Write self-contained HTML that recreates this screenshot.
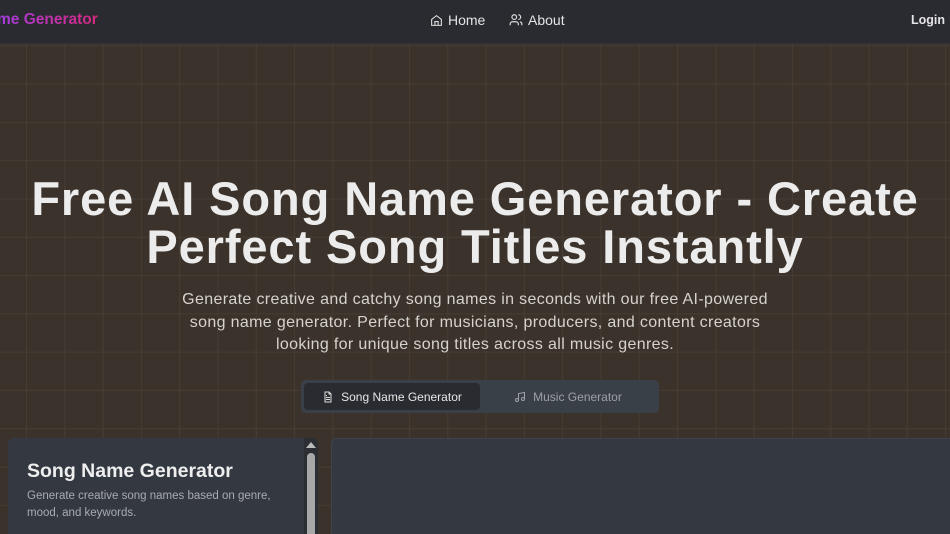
<!DOCTYPE html>
<html><head><meta charset="utf-8"><style>
*{margin:0;padding:0;box-sizing:border-box}
html,body{width:950px;height:534px;overflow:hidden}
body{font-family:"Liberation Sans",sans-serif;background-color:#3b332b;
background-image:linear-gradient(to right,#463d34 1px,transparent 1px),linear-gradient(to bottom,#463d34 1px,transparent 1px);
background-size:38.3px 38.3px;background-position:26px 7px;position:relative}
.nav{position:absolute;top:0;left:0;width:950px;height:44px;background:#2a2b30;border-bottom:1px solid #33343a}
.logo{position:absolute;left:-3px;top:11px;font-size:15.5px;font-weight:bold;background:linear-gradient(90deg,#a33ee0,#d6287f);-webkit-background-clip:text;color:transparent}
.nl{position:absolute;top:12px;font-size:14px;color:#e4e4e8;display:flex;align-items:center;gap:5px}
h1{position:absolute;top:175px;left:0;width:950px;text-align:center;font-size:47px;letter-spacing:0.9px;line-height:48px;font-weight:bold;color:#ececec}
p.sub{position:absolute;top:289px;left:170px;width:610px;text-align:center;font-size:16px;letter-spacing:0.35px;line-height:22.5px;color:#d6d2cd}
.tabs{position:absolute;left:301px;top:380px;width:358px;height:33px;background:#3a4048;border-radius:5px}
.t1{position:absolute;left:3px;top:3px;width:176px;height:27px;background:#2a2b30;border-radius:4px;color:#e6e6e6;font-size:12px;display:flex;align-items:center;justify-content:center;gap:7px}
.t2{position:absolute;left:179px;top:3px;width:176px;height:27px;color:#9ca0a8;font-size:12px;display:flex;align-items:center;justify-content:center;gap:7px}
.card{position:absolute;left:8px;top:438px;width:310px;height:100px;background:#343941;border-radius:6px}
.card h2{position:absolute;left:19px;top:22px;font-size:19.5px;color:#eee;font-weight:bold}
.card p{position:absolute;left:19px;top:50px;width:265px;font-size:11.5px;line-height:16.5px;color:#a8abb0}
.sb{position:absolute;left:304px;top:438px;width:14px;height:100px;background:#2b2e33;border-radius:0 6px 0 0}
.thumb{position:absolute;left:307px;top:453px;width:8px;height:90px;background:#a8a8a8;border-radius:4px}
.arr{position:absolute;left:306px;top:442px;width:0;height:0;border-left:5px solid transparent;border-right:5px solid transparent;border-bottom:6px solid #bbb}
.panel{position:absolute;left:331px;top:438px;width:630px;height:100px;background:#343941;border-radius:6px;border:1px solid #3e434b}
</style></head><body>
<div class="nav">
<div class="logo">me Generator</div>
<div class="nl" style="left:430px"><svg width="13" height="13" viewBox="0 0 24 24" fill="none" stroke="#ddd" stroke-width="2"><path d="M3 10l9-7 9 7v11H3z"/><path d="M9 21v-7h6v7"/></svg>Home</div>
<div class="nl" style="left:509px"><svg width="14" height="14" viewBox="0 0 24 24" fill="none" stroke="#ddd" stroke-width="2"><circle cx="9" cy="7" r="4"/><path d="M2 21v-2a4 4 0 0 1 4-4h6a4 4 0 0 1 4 4v2M16 3a4 4 0 0 1 0 8M22 21v-2a4 4 0 0 0-3-3.9"/></svg>About</div>
<div class="nl" style="left:911px;font-size:12.5px;font-weight:bold;top:13px">Login</div>
</div>
<h1>Free AI Song Name Generator - Create<br>Perfect Song Titles Instantly</h1>
<p class="sub">Generate creative and catchy song names in seconds with our free AI-powered<br>song name generator. Perfect for musicians, producers, and content creators<br>looking for unique song titles across all music genres.</p>
<div class="tabs">
<div class="t1"><svg width="12" height="12" viewBox="0 0 24 24" fill="none" stroke="#ddd" stroke-width="2"><path d="M14 2H6v20h12V6z M14 2v4h4 M8 13h8 M8 17h8 M8 9h2"/></svg>Song Name Generator</div>
<div class="t2"><svg width="12" height="12" viewBox="0 0 24 24" fill="none" stroke="#9ca0a8" stroke-width="2"><path d="M9 18V5l12-2v13"/><circle cx="6" cy="18" r="3"/><circle cx="18" cy="16" r="3"/></svg>Music Generator</div>
</div>
<div class="card"><h2>Song Name Generator</h2><p>Generate creative song names based on genre, mood, and keywords.</p></div>
<div class="sb"></div><div class="arr"></div><div class="thumb"></div>
<div class="panel"></div>
</body></html>
